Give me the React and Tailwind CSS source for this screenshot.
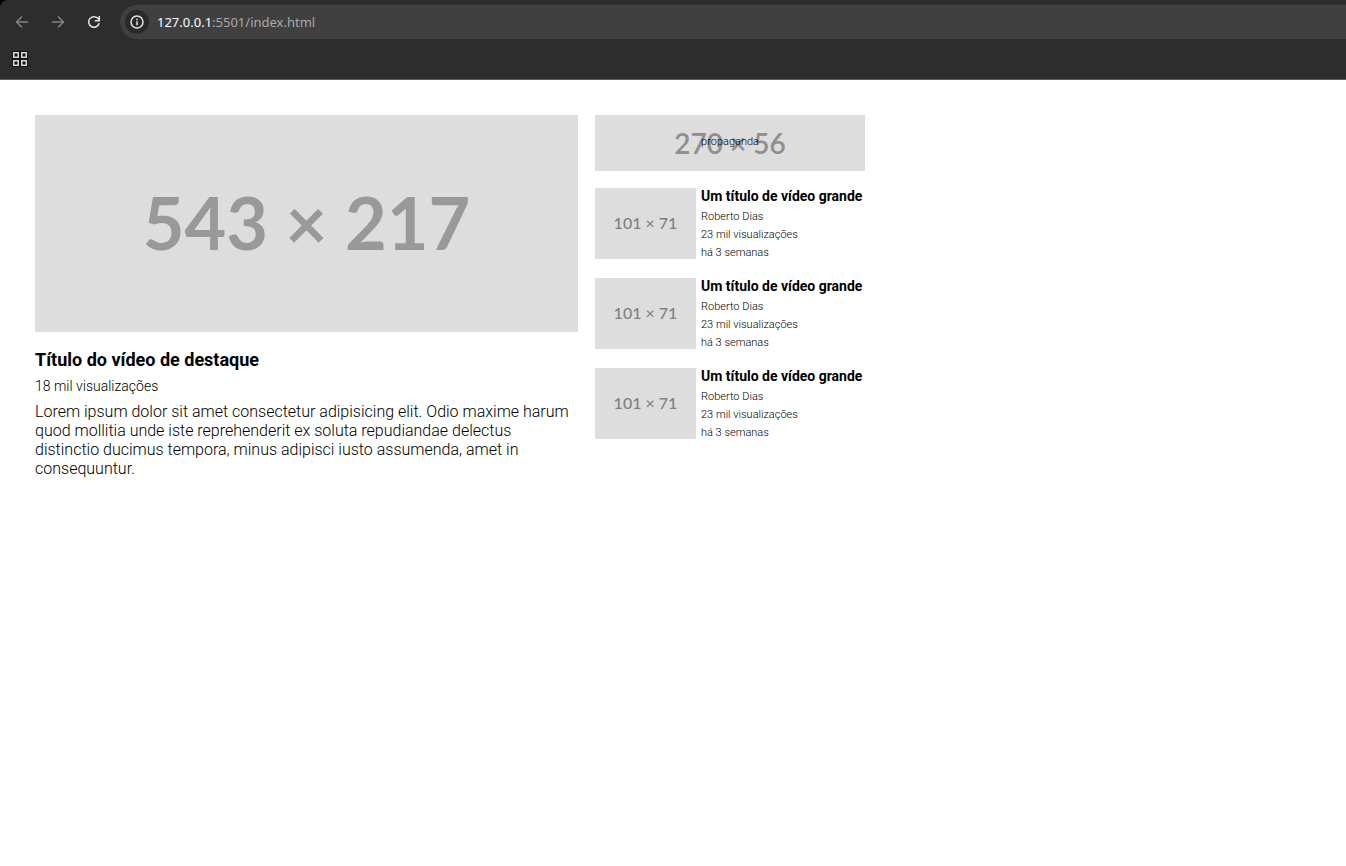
const related = [
  { title: "Um título de vídeo grande", channel: "Roberto Dias", views: "23 mil visualizações", age: "há 3 semanas" },
  { title: "Um título de vídeo grande", channel: "Roberto Dias", views: "23 mil visualizações", age: "há 3 semanas" },
  { title: "Um título de vídeo grande", channel: "Roberto Dias", views: "23 mil visualizações", age: "há 3 semanas" },
];

function BrowserBar() {
  return (
    <header className="bg-black">
      <div className="flex flex-col rounded-tl-lg border-b border-[#5a5a5a] bg-[#2d2d2d] pt-[5px]">
        <nav aria-label="Navegador" className="flex items-center">
          <div className="flex gap-3 pr-[14px] pl-[10px]">
            <button type="button" aria-label="Voltar" className="grid size-6 place-items-center text-[#838383]">
              <svg viewBox="0 0 14 14" className="size-[14px]" fill="none" stroke="currentColor" strokeWidth="1.5">
                <path d="M13 7H2M7 1.5 1.5 7 7 12.5" />
              </svg>
            </button>
            <button type="button" aria-label="Avançar" className="grid size-6 place-items-center text-[#838383]">
              <svg viewBox="0 0 14 14" className="size-[14px]" fill="none" stroke="currentColor" strokeWidth="1.5">
                <path d="M1 7h11M7 1.5 12.5 7 7 12.5" />
              </svg>
            </button>
            <button type="button" aria-label="Recarregar" className="grid size-6 place-items-center text-[#e3e3e3]">
              <svg viewBox="0 0 14 14" className="size-[14px]" fill="none" stroke="currentColor" strokeWidth="1.5">
                <path d="M12.1 8.3A5.3 5.3 0 1 1 10.8 3.3L12.3 5M12.3 1v4.7H7.8" />
              </svg>
            </button>
          </div>
          <div className="flex h-[34px] grow items-center gap-2 rounded-l-full bg-[#404040] pl-[5px]">
            <button type="button" aria-label="Informações do site" className="grid size-6 place-items-center rounded-full bg-[#2a2a2a] text-[#e3e3e3]">
              <svg viewBox="0 0 14 14" className="size-[14px]" fill="none" stroke="currentColor" strokeWidth="1.5">
                <circle cx="7" cy="7" r="6" />
                <path d="M7 6.2v4M7 3.8v1.5" />
              </svg>
            </button>
            <div
              role="textbox"
              tabIndex={0}
              aria-label="Endereço"
              className="font-['Noto_Sans',sans-serif] text-[13px] leading-5 font-normal text-[#a9a9a9] outline-none"
            >
              <span className="text-white">127.0.0.1</span>:5501/index.html
            </div>
          </div>
        </nav>
        <div className="flex h-10 items-center pl-2">
          <button type="button" aria-label="Aplicativos" className="grid size-6 place-items-center text-[#d8d8d8]">
            <svg viewBox="0 0 16 16" className="size-4" fill="#151515">
              <path d="M0 0h16v16H0z" />
              <path
                d="M1.75 1.75h4.5v4.5h-4.5zM9.75 1.75h4.5v4.5h-4.5zM1.75 9.75h4.5v4.5h-4.5zM9.75 9.75h4.5v4.5h-4.5z"
                stroke="currentColor"
                strokeWidth="1.5"
              />
            </svg>
          </button>
        </div>
      </div>
    </header>
  );
}

export default function App() {
  return (
    <div className="min-h-screen bg-white font-[Roboto,sans-serif] font-light text-black">
      <BrowserBar />
      <main className="flex items-start gap-[17px] p-[35px]">
        <article className="w-[543px]">
          <div className="grid h-[217px] place-items-center bg-[#dddddd] pb-1 font-[Lato,sans-serif] text-7xl font-bold text-[#999999]">
            543 × 217
          </div>
          <h1 className="mt-4 text-lg leading-6 font-bold">Título do vídeo de destaque</h1>
          <p className="mt-1 text-sm leading-5">18 mil visualizações</p>
          <p className="mt-1.5 text-base leading-[19px]">
            Lorem ipsum dolor sit amet consectetur adipisicing elit. Odio maxime harum quod mollitia unde iste
            reprehenderit ex soluta repudiandae delectus distinctio ducimus tempora, minus adipisci iusto assumenda,
            amet in consequuntur.
          </p>
        </article>
        <aside className="w-[270px]">
          <div className="relative grid h-14 place-items-center bg-[#dddddd] font-[Lato,sans-serif] text-[28px] font-semibold text-[#8f8f8f]">
            270 × 56
            <p className="absolute inset-x-0 top-5 text-center font-[Roboto,sans-serif] text-[11px] leading-[14px] font-light text-black">
              propaganda
            </p>
          </div>
          <ul className="mt-[17px] flex flex-col gap-[19px]">
            {related.map((video, i) => (
              <li key={i} className="flex h-[71px] gap-[5px]">
                <div className="grid w-[101px] shrink-0 place-items-center bg-[#dddddd] pb-0.5 font-[Lato,sans-serif] text-base font-medium text-[#808080]">
                  101 × 71
                </div>
                <div className="text-[11px] leading-[18px] whitespace-nowrap">
                  <h2 className="mb-1 text-sm leading-4 font-bold">{video.title}</h2>
                  <p>{video.channel}</p>
                  <p>{video.views}</p>
                  <p>{video.age}</p>
                </div>
              </li>
            ))}
          </ul>
        </aside>
      </main>
    </div>
  );
}
